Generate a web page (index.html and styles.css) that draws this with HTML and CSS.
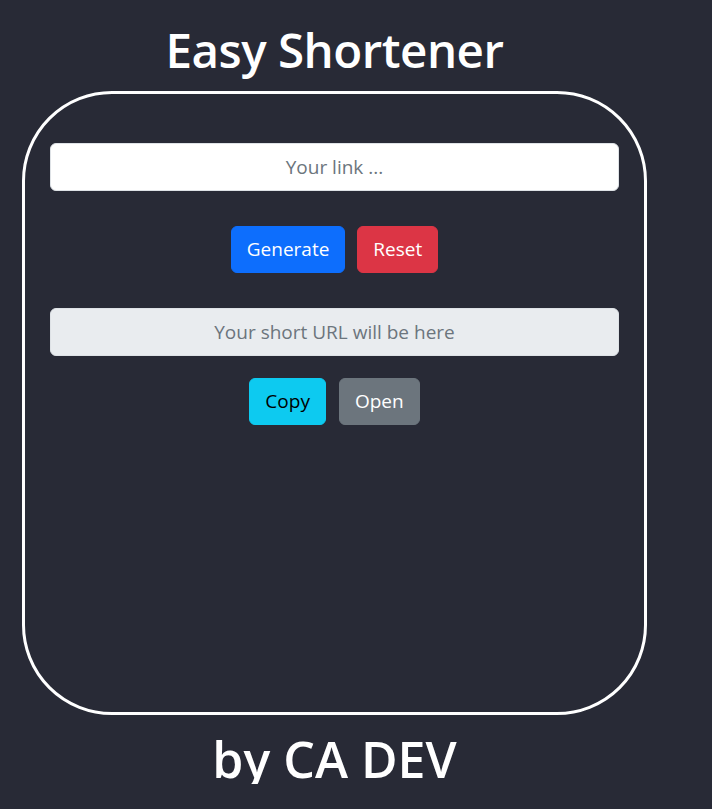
FILE: index.html
```html
<!DOCTYPE html>
<html lang="en">
<head>
<meta charset="utf-8">
<title>Easy Shortener</title>
<link rel="stylesheet" href="styles.css">
</head>
<body>
<div class="page">
  <h1 class="title">Easy Shortener</h1>
  <div class="card">
    <input class="field" type="text" placeholder="Your link ...">
    <div class="actions actions-top">
      <button class="btn btn-primary">Generate</button>
      <button class="btn btn-danger">Reset</button>
    </div>
    <input class="field field-disabled" type="text" placeholder="Your short URL will be here" disabled>
    <div class="actions actions-bottom">
      <button class="btn btn-info">Copy</button>
      <button class="btn btn-secondary">Open</button>
    </div>
  </div>
  <h1 class="title footer">by CA DEV</h1>
</div>
</body>
</html>
```

FILE: styles.css
```css
html, body {
  margin: 0;
  padding: 0;
  background: #282a36;
}
body {
  font-family: "Open Sans", "Noto Sans", sans-serif;
  color: #fff;
}
.page {
  width: 669px;
  display: flex;
  flex-direction: column;
  align-items: center;
}
.title {
  margin: 0;
  font-size: 47.5px;
  font-weight: 600;
  line-height: 1;
  color: #fff;
  letter-spacing: -0.5px;
}
.title:first-child {
  margin-top: 26px;
  margin-bottom: 17px;
}
.footer {
  margin-top: 19px;
  font-size: 50px;
  letter-spacing: 0;
}
.card {
  box-sizing: border-box;
  width: 625px;
  height: 624px;
  border: 3px solid #fff;
  border-radius: 90px;
  padding: 49px 25px;
  display: flex;
  flex-direction: column;
}
.field {
  box-sizing: border-box;
  width: 100%;
  height: 48px;
  border: 1px solid #dee2e6;
  border-radius: 6px;
  background: #fff;
  font-family: inherit;
  font-size: 19px;
  text-align: center;
  color: #212529;
  padding: 0 16px;
  outline: none;
}
.field::placeholder {
  color: #6c757d;
  opacity: 1;
}
.field-disabled {
  background: #e9ecef;
}
.actions {
  display: flex;
  justify-content: center;
}
.actions-top {
  margin: 35px 0 35px;
  gap: 12px;
}
.actions-bottom {
  margin-top: 22px;
  gap: 13px;
}
.btn {
  height: 47px;
  padding: 0 15px;
  border: 1px solid transparent;
  border-radius: 6px;
  font-family: inherit;
  font-size: 19px;
  color: #fff;
  cursor: pointer;
}
.btn-primary { background: #0d6efd; border-color: #0d6efd; }
.btn-danger { background: #dc3545; border-color: #dc3545; }
.btn-info { background: #0dcaf0; border-color: #0dcaf0; color: #000; }
.btn-secondary { background: #6c757d; border-color: #6c757d; }
```
